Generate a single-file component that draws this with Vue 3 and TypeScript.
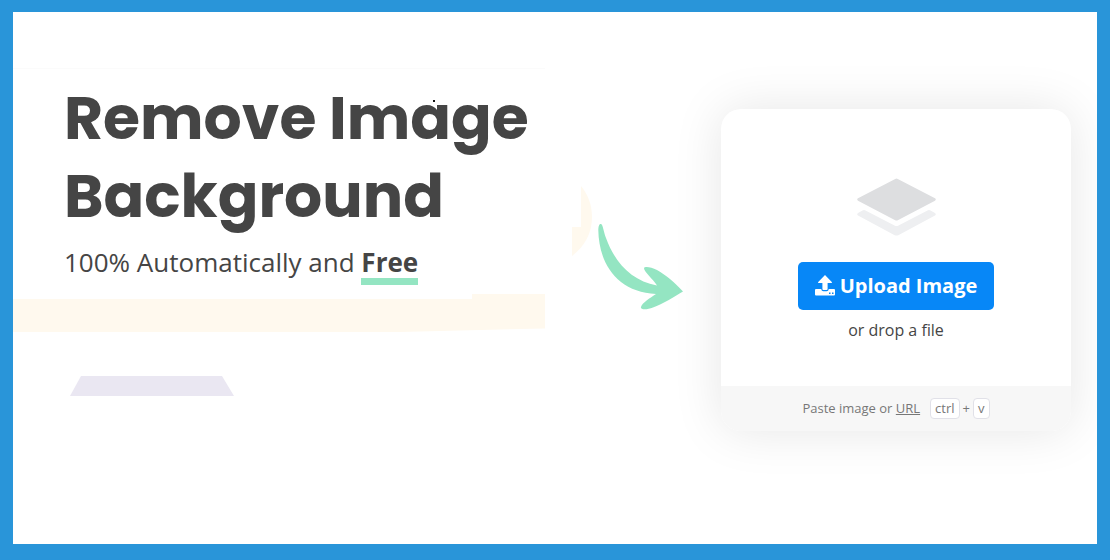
<script setup lang="ts">
import { ref } from 'vue'

const picker = ref<HTMLInputElement | null>(null)
const shortcut: string[] = ['ctrl', 'v']

function openPicker(): void {
  picker.value?.click()
}
</script>

<template>
  <main class="page">
    <svg class="decor" width="700" height="532" viewBox="13 12 700 532" aria-hidden="true">
      <path d="M13 68.5H545" stroke="#fbfbfb" />
      <path d="M13 299H472V294H545V328.500L500 329.500L400 332H13Z" fill="#fff9ee" />
      <path d="M81 376H222L234 396H70Z" fill="#eae7f2" />
      <path d="M581 186C589 196 592 206 592 217C592 233 585 246 572 256V227H581Z" fill="#fff9ee" />
      <rect x="433" y="100" width="2" height="2" fill="#111" />
    </svg>

    <section class="hero">
      <h1>Remove Image Background</h1>
      <p class="tagline">100% Automatically and <strong>Free</strong></p>
    </section>

    <svg class="arrow" width="86" height="86" viewBox="598 224 86 86" aria-hidden="true">
      <path
        d="M600 224C603 223 603 230 606 238C615 263 632 281 657 285.500C653 279 644 272 644 268C645 266 651 267 657 270C666 275 674 282 683 291.500C674 297 663 304 653 307.500C647 310 640 310 641 307C642 303 650 298 656 294C618 292 599 265 598.300 230C598.400 227 598.800 225 600 224Z"
        fill="#94e5c2"
      />
    </svg>

    <section class="card">
      <div class="drop">
        <svg class="layers" width="80" height="58" viewBox="0 0 80 58" aria-hidden="true">
          <path d="M39.200 .9Q40.500 .2 41.800 .9L79 20.300Q80.600 21.500 79 22.700L41.800 42.200Q40.500 43 39.200 42.200L2 22.700Q.4 21.500 2 20.300Z" fill="#dddee0" />
          <path d="M6.500 32.400Q8 31.700 9.500 32.400L38.500 47.500Q40.500 48.500 42.500 47.500L71.500 32.400Q73 31.700 74.500 32.400L79 35Q80.600 36.300 79 37.600L42.300 57.200Q40.500 58 38.700 57.200L2 37.600Q.4 36.300 2 35Z" fill="#eeeff1" />
        </svg>
        <button class="upload" type="button" @click="openPicker">
          <svg width="20" height="22" viewBox="0 0 20 22" aria-hidden="true">
            <path d="M10 0L17 7.200Q17.200 8 16.400 8H12.600V14Q12.600 15 11.600 15H8.400Q7.400 15 7.400 14V8H3.600Q2.800 8 3 7.200Z" fill="#fff" />
            <path d="M1 14H6.200Q6.600 16.200 8.400 16.200H11.600Q13.400 16.200 13.800 14H19Q20 14 20 15V19.500Q20 20.500 19 20.500H1Q0 20.500 0 19.500V15Q0 14 1 14Z" fill="#fff" />
            <path d="M14 17.600H15.500V19H14ZM17 17.600H18.500V19H17Z" fill="#0787f7" />
          </svg>
          Upload Image
        </button>
        <input ref="picker" type="file" accept="image/*" aria-label="Image file" hidden />
        <p class="hint">or drop a file</p>
      </div>
      <footer class="paste">
        <span>Paste image or <a href="#url">URL</a></span>
        <span class="keys">
          <kbd>{{ shortcut[0] }}</kbd>
          <span>+</span>
          <kbd>{{ shortcut[1] }}</kbd>
        </span>
      </footer>
    </section>
  </main>
</template>

<style>
body {
  margin: 0;
}
</style>

<style scoped>
.page {
  position: relative;
  box-sizing: border-box;
  min-height: 100vh;
  overflow: hidden;
  border: 13px solid #2995d9;
  border-top-width: 12px;
  border-bottom-width: 16px;
  padding: 66px 26px 66px 51px;
  display: grid;
  grid-template-columns: minmax(0, 1fr) 86px 350px;
  column-gap: 37px;
  align-items: start;
  background: #fff;
  color: #454545;
  font-family: "Open Sans", "Noto Sans", sans-serif;
}

.decor {
  position: absolute;
  top: 0;
  left: 0;
}

.hero {
  padding-top: 1px;
}

h1 {
  margin: 0;
  font: 700 60px/78px Poppins, Inter, sans-serif;
}

.tagline {
  margin: 9px 0 0;
  font-size: 26px;
  line-height: 36px;
}

.hero,
.arrow,
.card {
  position: relative;
}

.tagline strong {
  display: inline-block;
  border-bottom: 7px solid #94e5c2;
  line-height: 32px;
}

.arrow {
  margin-top: 146px;
}

.card {
  margin-top: 31px;
  overflow: hidden;
  border-radius: 20px;
  background: #fff;
  box-shadow: 0 0 50px rgba(0, 0, 0, 0.1);
}

.drop {
  display: flex;
  flex-direction: column;
  align-items: center;
  padding: 69px 20px 44px;
}

.upload {
  display: flex;
  align-items: center;
  gap: 5px;
  height: 48px;
  margin-top: 26px;
  padding: 0 17px;
  border: 0;
  border-radius: 5px;
  background: #0787f7;
  color: #fff;
  font: 700 20px/28px "Open Sans", sans-serif;
  white-space: nowrap;
  cursor: pointer;
}

.hint {
  margin: 8px 0 0;
  font-size: 16px;
  line-height: 24px;
}

.paste {
  display: flex;
  align-items: center;
  justify-content: center;
  gap: 10px;
  height: 45px;
  background: #f7f7f7;
  color: #777;
  font-size: 13px;
  line-height: 19px;
}

.paste a {
  color: inherit;
}

.keys {
  display: flex;
  align-items: center;
  gap: 3px;
}

kbd {
  padding: 0 4px;
  border: 1px solid #e1e1e8;
  border-radius: 4px;
  background: #fff;
  font: 13px/19px "Open Sans", sans-serif;
}
</style>
